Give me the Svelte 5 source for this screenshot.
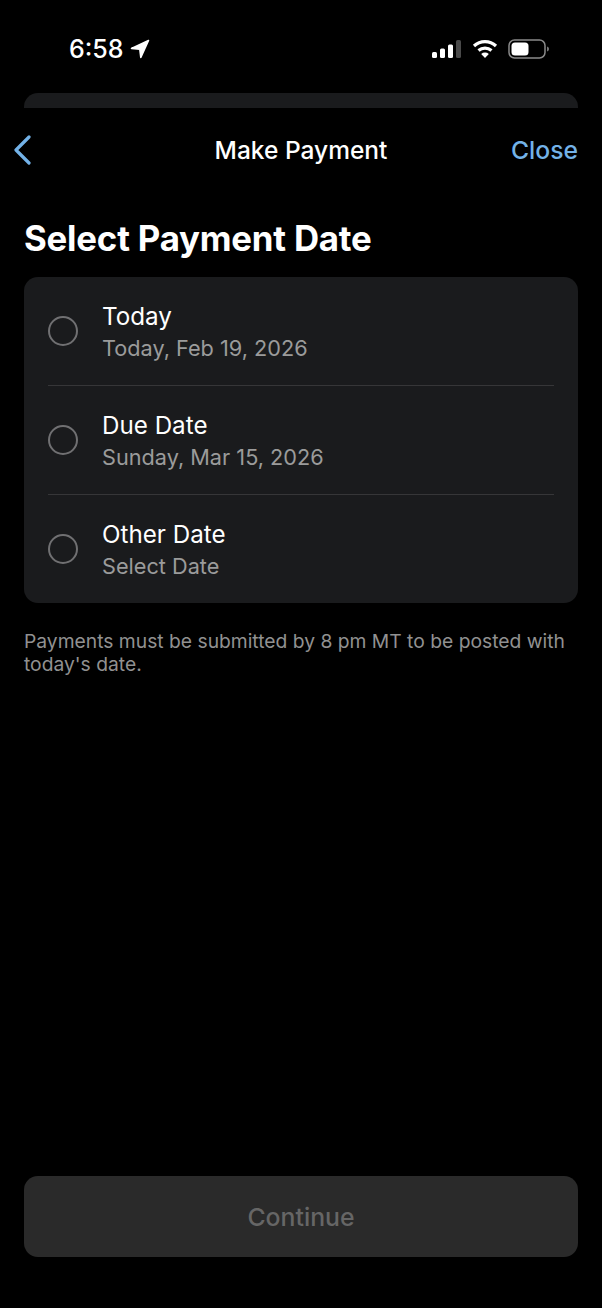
<script lang="ts">
	const options = [
		{ title: 'Today', sub: 'Today, Feb 19, 2026' },
		{ title: 'Due Date', sub: 'Sunday, Mar 15, 2026' },
		{ title: 'Other Date', sub: 'Select Date' }
	];
</script>

<div class="screen">
	<div class="status">
		<div class="status-left">
			<span class="time">6:58</span>
			<svg class="loc" width="20" height="20" viewBox="0 0 20 20">
				<path d="M18.5 1.5 L1.5 9.4 L9.8 10.2 L10.8 18.5 Z" fill="#fff" stroke="#fff" stroke-width="1.6" stroke-linejoin="round" />
			</svg>
		</div>
		<div class="status-right">
			<svg width="30" height="20" viewBox="0 0 30 20">
				<rect x="0" y="13" width="5" height="6" rx="1.5" fill="#fff" />
				<rect x="8" y="9.5" width="5" height="9.5" rx="1.5" fill="#fff" />
				<rect x="16" y="5.5" width="5" height="13.5" rx="1.5" fill="#fff" />
				<rect x="24" y="1" width="5" height="18" rx="1.5" fill="#4a4a4a" />
			</svg>
			<svg width="26" height="20" viewBox="0 0 26 20">
				<path d="M2 7 A16 16 0 0 1 24 7" fill="none" stroke="#fff" stroke-width="3.2" />
				<path d="M6.5 11.5 A10 10 0 0 1 19.5 11.5" fill="none" stroke="#fff" stroke-width="3.2" />
				<path d="M13 19 L9.2 15 A5.6 5.6 0 0 1 16.8 15 Z" fill="#fff" />
			</svg>
			<svg width="42" height="22" viewBox="0 0 42 22">
				<rect x="1" y="2" width="36" height="18" rx="5.5" fill="none" stroke="#8a8a8a" stroke-width="1.5" />
				<rect x="3.5" y="4.5" width="17" height="13" rx="3.5" fill="#fff" />
				<path d="M39 8.5 C40.5 9 41 10 41 11 C41 12 40.5 13 39 13.5 Z" fill="#777" />
			</svg>
		</div>
	</div>

	<div class="peek"></div>

	<header class="nav">
		<svg class="back" width="20" height="30" viewBox="0 0 20 30">
			<path d="M17 2 L4 15 L17 28" fill="none" stroke="#73b2e8" stroke-width="3.2" stroke-linecap="round" stroke-linejoin="round" />
		</svg>
		<span class="nav-title">Make Payment</span>
		<span class="close">Close</span>
	</header>

	<h1>Select Payment Date</h1>

	<div class="card">
		{#each options as opt}
			<div class="row">
				<span class="radio"></span>
				<div class="row-text">
					<div class="row-title">{opt.title}</div>
					<div class="row-sub">{opt.sub}</div>
				</div>
			</div>
		{/each}
	</div>

	<p class="note">Payments must be submitted by 8 pm MT to be posted with today's date.</p>

	<div class="spacer"></div>

	<button class="continue" type="button" disabled>Continue</button>
</div>

<style>
	:global(body) {
		margin: 0;
		background: #000;
	}
	.screen {
		width: 602px;
		height: 1308px;
		box-sizing: border-box;
		padding: 0 24px 51px;
		display: flex;
		flex-direction: column;
		background: #000;
		color: #fff;
		font-family: Inter, 'Liberation Sans', sans-serif;
		overflow: hidden;
	}
	.status {
		height: 93px;
		flex: none;
		display: flex;
		justify-content: space-between;
		align-items: flex-start;
		padding: 35px 28px 0 45px;
		box-sizing: border-box;
	}
	.status-left {
		display: flex;
		align-items: center;
		gap: 6px;
		height: 28px;
	}
	.time {
		font-size: 25px;
		font-weight: 500;
		line-height: 28px;
	}
	.status-right {
		display: flex;
		align-items: center;
		gap: 10px;
		height: 28px;
	}
	.peek {
		flex: none;
		height: 15px;
		background: #1a1b1d;
		border-radius: 14px 14px 0 0;
	}
	.nav {
		flex: none;
		height: 84px;
		display: flex;
		align-items: center;
		justify-content: space-between;
		position: relative;
	}
	.back {
		margin-left: -12px;
	}
	.nav-title {
		position: absolute;
		left: 0;
		right: 0;
		text-align: center;
		font-size: 24.5px;
		font-weight: 500;
	}
	.close {
		color: #73b2e8;
		font-size: 24.7px;
		font-weight: 500;
	}
	h1 {
		margin: 26px 0 19px;
		font-size: 34.8px;
		line-height: 40px;
		font-weight: 700;
		letter-spacing: -0.2px;
	}
	.card {
		flex: none;
		background: #1a1b1d;
		border-radius: 14px;
		padding: 0 24px;
	}
	.row {
		height: 109px;
		box-sizing: border-box;
		display: flex;
		align-items: center;
		gap: 24px;
		border-bottom: 1px solid #363638;
	}
	.row:last-child {
		border-bottom: 0;
		height: 108px;
	}
	.radio {
		width: 30px;
		height: 30px;
		box-sizing: border-box;
		border: 2px solid #707072;
		border-radius: 50%;
		flex: none;
	}
	.row-text {
		padding-top: 2px;
	}
	.row-title {
		font-size: 24.2px;
		line-height: 32px;
	}
	.row-sub {
		font-size: 21.7px;
		line-height: 30px;
		color: #9b9b9b;
	}
	.note {
		margin: 27px 0 0;
		font-size: 19.27px;
		line-height: 23px;
		color: #919191;
	}
	.spacer {
		flex: 1;
	}
	.continue {
		flex: none;
		height: 81px;
		width: 100%;
		border: 0;
		border-radius: 14px;
		background: #2a2a2a;
		color: #666;
		font-family: inherit;
		font-size: 24.8px;
		font-weight: 500;
	}
</style>
